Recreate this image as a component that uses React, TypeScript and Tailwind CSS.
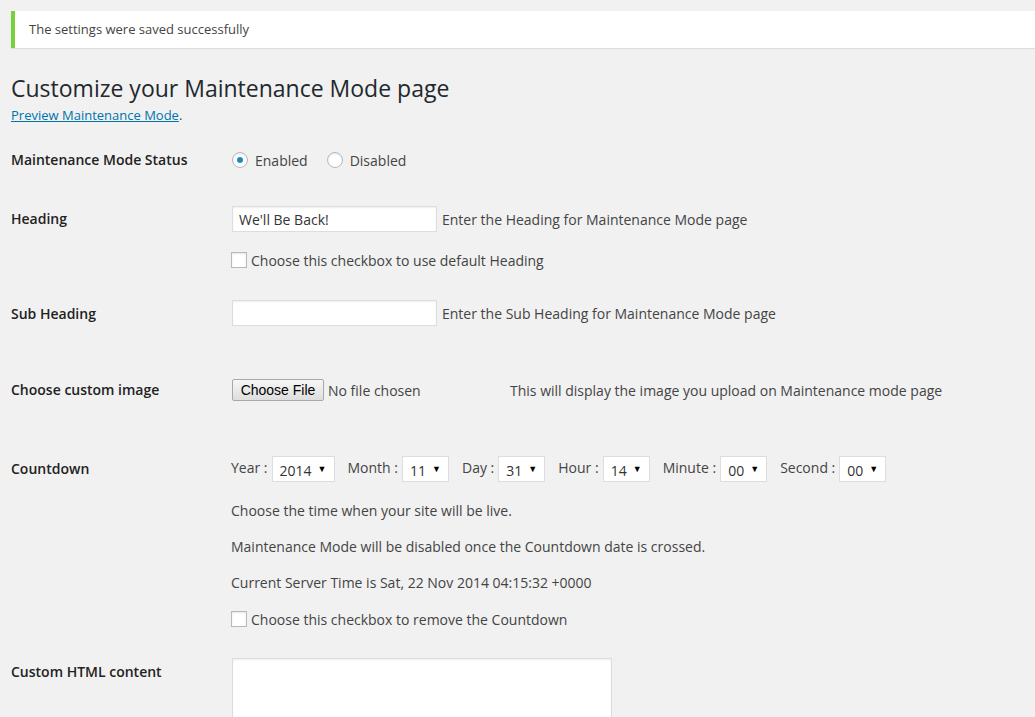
import React from 'react'

const labelCls = 'w-[221px] shrink-0 text-[14px] font-semibold text-[#222] leading-[24px]'

function Radio({ checked }: { checked?: boolean }) {
  return (
    <span className="w-[16px] h-[16px] rounded-full border border-[#b4b9be] bg-white shadow-[inset_0_1px_2px_rgba(0,0,0,0.1)] flex items-center justify-center shrink-0">
      {checked && <span className="w-[6px] h-[6px] rounded-full bg-[#1e8cbe]" />}
    </span>
  )
}

function Checkbox() {
  return <span className="w-[16px] h-[16px] border border-[#b4b9be] bg-white shadow-[inset_0_1px_2px_rgba(0,0,0,0.1)] shrink-0" />
}

function TextInput({ value }: { value?: string }) {
  return (
    <div className="w-[205px] h-[26px] border border-[#ddd] bg-white shadow-[inset_0_1px_2px_rgba(0,0,0,0.07)] pl-[6px] flex items-center text-[14px] text-[#333]">
      {value}
    </div>
  )
}

function Select({ value, width }: { value: string; width: string }) {
  return (
    <div className={`${width} h-[26px] border border-[#ddd] bg-white flex items-center justify-between pl-[7px] pr-[7px] text-[14px] text-[#333]`}>
      <span className="pt-[3px]">{value}</span>
      <span className="text-[9px] text-black">▼</span>
    </div>
  )
}

function CountdownField({ label, value, width }: { label: string; value: string; width: string }) {
  return (
    <div className="flex items-center gap-[4px]">
      <span className="text-[14px] text-[#444] pb-[4px]">{label}</span>
      <Select value={value} width={width} />
    </div>
  )
}

export default function App() {
  return (
    <div
      className="min-h-screen bg-[#f1f1f1] pl-[11px] pt-[11px] text-[#444] overflow-hidden"
      style={{ fontFamily: '"Open Sans", "Noto Sans", sans-serif' }}
    >
      {/* Notice */}
      <div className="h-[37px] bg-white border-l-4 border-[#7ad03a] shadow-[0_1px_1px_rgba(0,0,0,0.08)] flex items-center pl-[14px] pt-[1px] text-[13px] text-[#444]">
        The settings were saved successfully
      </div>

      <h2 className="mt-[26px] text-[23px] leading-[29px] text-[#23282d]">Customize your Maintenance Mode page</h2>
      <p className="mt-[3px] text-[13px] leading-[19px]">
        <a href="#" className="text-[#0073aa] underline">Preview Maintenance Mode</a>.
      </p>

      {/* Status */}
      <div className="flex mt-[23px]">
        <div className={labelCls}>Maintenance Mode Status</div>
        <div className="flex items-center h-[24px] text-[14px]">
          <Radio checked />
          <span className="ml-[7px]">Enabled</span>
          <span className="ml-[19px]" />
          <Radio />
          <span className="ml-[7px]">Disabled</span>
        </div>
      </div>

      {/* Heading */}
      <div className="flex mt-[34px]">
        <div className={`${labelCls} pt-[1px]`}>Heading</div>
        <div className="flex flex-col">
          <div className="flex items-center">
            <TextInput value="We'll Be Back!" />
            <span className="ml-[5px] text-[14px]">Enter the Heading for Maintenance Mode page</span>
          </div>
          <div className="flex items-center h-[24px] mt-[16px] text-[14px] -ml-[1px]">
            <Checkbox />
            <span className="ml-[4px]">Choose this checkbox to use default Heading</span>
          </div>
        </div>
      </div>

      {/* Sub Heading */}
      <div className="flex mt-[28px]">
        <div className={`${labelCls} pt-[2px]`}>Sub Heading</div>
        <div className="flex items-center">
          <TextInput />
          <span className="ml-[5px] text-[14px]">Enter the Sub Heading for Maintenance Mode page</span>
        </div>
      </div>

      {/* Image */}
      <div className="flex mt-[52px]">
        <div className={labelCls}>Choose custom image</div>
        <div className="flex items-center h-[24px]">
          <div className="w-[278px] flex items-center">
            <button
              className="h-[22px] w-[92px] border border-[#a9a9a9] rounded-[2px] bg-gradient-to-b from-[#f6f6f6] to-[#dedede] text-[14px] text-black"
              style={{ fontFamily: '"Liberation Sans", Arial, sans-serif' }}
            >
              Choose File
            </button>
            <span className="ml-[4px] text-[14px] text-[#444]">No file chosen</span>
          </div>
          <span className="text-[14px]">This will display the image you upload on Maintenance mode page</span>
        </div>
      </div>

      {/* Countdown */}
      <div className="flex mt-[54px]">
        <div className={`${labelCls} pt-[1px]`}>Countdown</div>
        <div className="flex flex-col text-[14px]">
          <div className="flex items-center gap-[13px] -ml-[1px]">
            <CountdownField label="Year :" value="2014" width="w-[63px]" />
            <CountdownField label="Month :" value="11" width="w-[47px]" />
            <CountdownField label="Day :" value="31" width="w-[47px]" />
            <CountdownField label="Hour :" value="14" width="w-[47px]" />
            <CountdownField label="Minute :" value="00" width="w-[47px]" />
            <CountdownField label="Second :" value="00" width="w-[47px]" />
          </div>
          <p className="mt-[17px] leading-[24px] -ml-[1px]">Choose the time when your site will be live.</p>
          <p className="mt-[12px] leading-[24px] -ml-[1px]">Maintenance Mode will be disabled once the Countdown date is crossed.</p>
          <p className="mt-[12px] leading-[24px] -ml-[1px]">Current Server Time is Sat, 22 Nov 2014 04:15:32 +0000</p>
          <div className="flex items-center h-[24px] mt-[12px] -ml-[1px]">
            <Checkbox />
            <span className="ml-[4px]">Choose this checkbox to remove the Countdown</span>
          </div>
        </div>
      </div>

      {/* Custom HTML */}
      <div className="flex mt-[27px]">
        <div className={`${labelCls} pt-[2px]`}>Custom HTML content</div>
        <div className="w-[380px] h-[120px] border border-[#ddd] bg-white shadow-[inset_0_1px_2px_rgba(0,0,0,0.07)]" />
      </div>
    </div>
  )
}
